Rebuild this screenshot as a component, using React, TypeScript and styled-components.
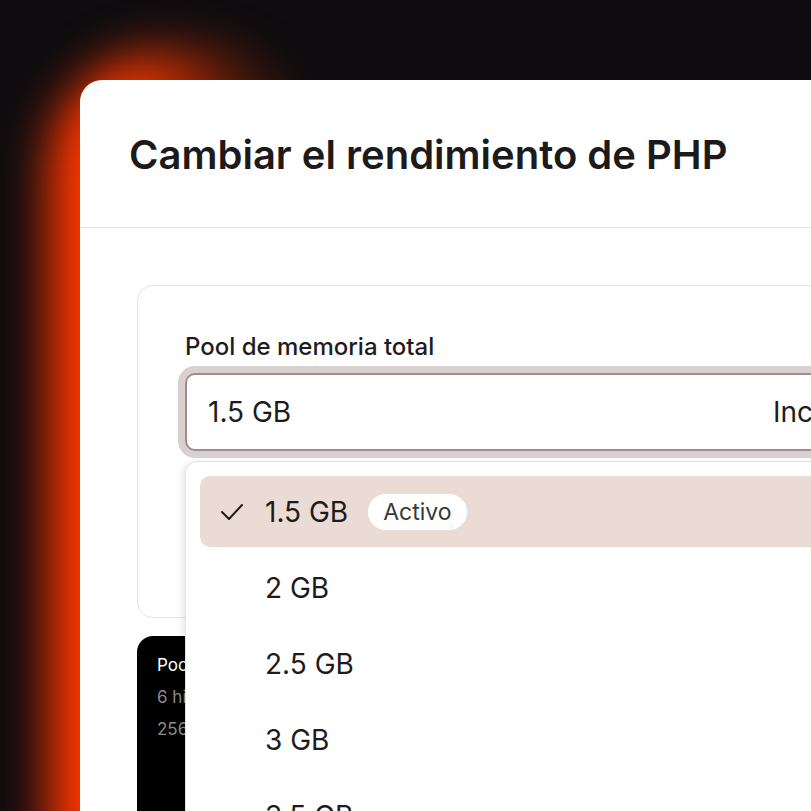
import styled, { createGlobalStyle } from "styled-components";

const GlobalStyle = createGlobalStyle`
    html, body {
        margin: 0;
        padding: 0;
        background: #0e0c0f;
    }
    * {
        box-sizing: border-box;
    }
`

const Stage = styled.div`
    position: relative;
    width: 811px;
    height: 811px;
    overflow: hidden;
    background: #0e0c0f;
    font-family: "Inter", "Noto Sans", sans-serif;
    padding: 80px 0 0 80px;
`

// orange glow that sits behind the card corner
const Glow = styled.div`
    position: absolute;
    left: 48px;
    top: 50px;
    width: 260px;
    height: 1000px;
    border-radius: 120px 100px 0 0;
    background: linear-gradient(90deg, #ff3400 0%, #ff3a00 30%, rgba(255, 60, 0, 0.3) 70%, rgba(255, 60, 0, 0) 100%);
    filter: blur(24px);
    z-index: 0;
`

const Card = styled.div`
    position: relative;
    z-index: 1;
    width: 1000px;
    height: 900px;
    background: #ffffff;
    border-top-left-radius: 22px;
`

const Header = styled.div`
    height: 148px;
    padding: 51px 0 0 49px;
    border-bottom: 1px solid #ebe1db;
`

const Title = styled.h1`
    margin: 0;
    font-size: 40px;
    line-height: 48px;
    font-weight: 600;
    color: #1c1a1b;
`

const Body = styled.div`
    display: flex;
    flex-direction: column;
    gap: 18px;
    padding: 57px 0 0 57px;
`

const Panel = styled.div`
    height: 333px;
    border: 1px solid #ede1da;
    border-radius: 16px;
    padding: 47px 0 0 47px;
`

const FieldLabel = styled.div`
    font-size: 24px;
    line-height: 28px;
    font-weight: 500;
    color: #1e1c1d;
    margin-bottom: 12px;
`

const InputWrap = styled.div`
    position: relative;
`

const Input = styled.div`
    display: flex;
    align-items: center;
    height: 78px;
    padding: 0 20px 0 21px;
    border: 2px solid #a58b85;
    border-radius: 10px;
    box-shadow: 0 0 0 7px #d9d0d2;
    font-size: 28px;
    color: #1d1b1c;
    background: #fff;
`

const InputValue = styled.span`
    width: 565px;
`

const InputSuffix = styled.span`
    white-space: nowrap;
`

const Menu = styled.div`
    position: absolute;
    top: calc(100% + 10px);
    left: 0;
    width: 720px;
    height: 400px;
    background: #ffffff;
    border: 1px solid #ebdfd8;
    border-radius: 12px;
    box-shadow: -3px 2px 6px rgba(0, 0, 0, 0.09);
    padding: 14px 0 0 14px;
    display: flex;
    flex-direction: column;
    gap: 5px;
    z-index: 3;
`

const Option = styled.div<{ $selected?: boolean }>`
    display: flex;
    align-items: center;
    height: 71px;
    padding-left: 20px;
    border-radius: 10px;
    background: ${p => p.$selected ? "#eadcd5" : "transparent"};
    font-size: 28px;
    color: #1d1b1c;
`

const CheckSlot = styled.span`
    display: flex;
    width: 24px;
    margin-right: 21px;
    color: #1d1b1c;
`

const Badge = styled.span`
    margin-left: 20px;
    height: 36px;
    padding: 0 15px;
    border-radius: 18px;
    background: #ffffff;
    font-size: 23px;
    line-height: 36px;
    color: #3b3839;
`

const DarkBox = styled.div`
    height: 300px;
    width: 400px;
    background: #000000;
    border-radius: 16px 16px 0 0;
    padding: 19px 0 0 20px;
    display: flex;
    flex-direction: column;
    gap: 11px;
`

const DarkLine = styled.div<{ $muted?: boolean }>`
    font-size: 17px;
    line-height: 21px;
    color: ${p => p.$muted ? "#8b8b8b" : "#ffffff"};
    white-space: nowrap;
`

function Check() {
    return (
        <svg width="24" height="24" viewBox="0 0 24 24" fill="none" stroke="currentColor" strokeWidth="2" strokeLinecap="round" strokeLinejoin="round">
            <polyline points="2 12 9 19 22 5" />
        </svg>
    )
}

const options = ["1.5 GB", "2 GB", "2.5 GB", "3 GB", "3.5 GB"]

export default function App() {
    return (
        <Stage>
            <GlobalStyle />
            <Glow />
            <Card>
                <Header>
                    <Title>Cambiar el rendimiento de PHP</Title>
                </Header>
                <Body>
                    <Panel>
                        <FieldLabel>Pool de memoria total</FieldLabel>
                        <InputWrap>
                            <Input>
                                <InputValue>1.5 GB</InputValue>
                                <InputSuffix>Incluido en tu plan</InputSuffix>
                            </Input>
                            <Menu>
                                {options.map((o, i) => (
                                    <Option key={o} $selected={i === 0}>
                                        <CheckSlot>{i === 0 ? <Check /> : null}</CheckSlot>
                                        {o}
                                        {i === 0 ? <Badge>Activo</Badge> : null}
                                    </Option>
                                ))}
                            </Menu>
                        </InputWrap>
                    </Panel>
                    <DarkBox>
                        <DarkLine>Pool de memoria</DarkLine>
                        <DarkLine $muted>6 hilos PHP</DarkLine>
                        <DarkLine $muted>256 MB por hilo</DarkLine>
                    </DarkBox>
                </Body>
            </Card>
        </Stage>
    )
}
